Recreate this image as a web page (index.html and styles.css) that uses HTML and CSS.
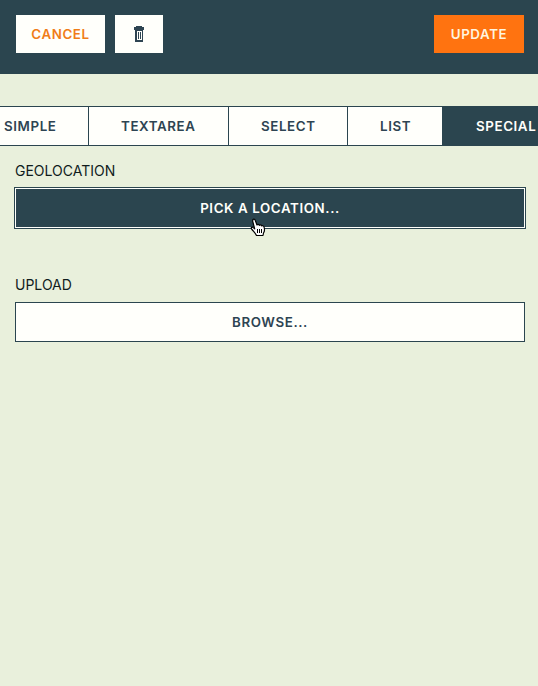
FILE: index.html
```html
<!DOCTYPE html>
<html lang="en">
<head>
<meta charset="utf-8">
<title>Edit item</title>
<link rel="stylesheet" href="styles.css">
</head>
<body>
<header class="toolbar">
  <button class="btn cancel">CANCEL</button>
  <button class="btn trash" aria-label="Delete">
    <svg width="12" height="16" viewBox="0 0 12 16" shape-rendering="crispEdges"><path fill="#2e4452" fill-rule="evenodd" d="M3 0h6v1h2v3h-1v12H2V4H1V1h2zM4 5v9h5V5z"/><path fill="#2e4452" d="M5 6h1v7H5zM7 6h1v7H7z"/></svg>
  </button>
  <button class="btn update">UPDATE</button>
</header>
<nav class="tabs">
  <a class="tab simple">SIMPLE</a>
  <a class="tab textarea">TEXTAREA</a>
  <a class="tab select">SELECT</a>
  <a class="tab list">LIST</a>
  <a class="tab special">SPECIAL</a>
</nav>
<main class="form">
  <section class="field">
    <label class="label">GEOLOCATION</label>
    <button class="wide active">PICK A LOCATION...</button>
  </section>
  <section class="field">
    <label class="label upload">UPLOAD</label>
    <button class="wide">BROWSE...</button>
  </section>
</main>
<svg class="cursor" width="17" height="19" viewBox="0 0 17 19"><path fill="#fff" stroke="#000" stroke-width="1.2" stroke-linejoin="round" d="M3 1.5c1-1 2 0 2.300 1L7 7c.5-1 2-.9 2.300.3.8-.9 2-.5 2.300.6 1-.7 2.200-.1 2.400 1 .8 2.400.7 4.400-.5 6.100L13 17.500H6.500C5.500 15 3.500 13.500 1.500 10.800c-.8-1.300.7-2.100 1.700-1.200l1.500 1.200L2.600 3z"/><path stroke="#000" d="M7.500 11v4M9.500 11v4M11.500 11v4"/></svg>
</body>
</html>
```
FILE: styles.css
```css
* { box-sizing: border-box; }
body {
  margin: 0;
  height: 686px;
  overflow: hidden;
  background: #e9f0dc;
  color: #101c1c;
  font-family: Inter, "Liberation Sans", sans-serif;
  font-size: 14px;
}
button {
  font: inherit;
  padding: 0;
  border: 0;
  border-radius: 0;
}
.toolbar {
  height: 74px;
  padding: 15px 14px 0 16px;
  display: flex;
  gap: 10px;
  background: #2b454f;
}
.btn, .tab, .wide {
  font-size: 13.333px;
  font-weight: 600;
  letter-spacing: .6px;
}
.btn {
  height: 38px;
  display: flex;
  align-items: center;
  justify-content: center;
  background: #fffffb;
}
.cancel { width: 89px; color: #f07d18; }
.trash { width: 48px; }
.update { width: 90px; margin-left: auto; background: #ff7310; color: #fff4df; }
.tabs {
  margin-top: 32px;
  height: 40px;
  display: flex;
  border-top: 1px solid #2b454f;
  border-bottom: 1px solid #2b454f;
  background: #fffffb;
}
.tab {
  flex: none;
  border-right: 1px solid #2b454f;
  padding-left: 32px;
  line-height: 39px;
  color: #2e4452;
  white-space: nowrap;
}
.simple { width: 89px; padding-left: 4px; }
.textarea { width: 140px; }
.select { width: 119px; }
.list { width: 95px; }
.special { width: 95px; padding-left: 33px; background: #2b454f; color: #fffffb; }
.form { padding: 15px 13px 0 14px; }
.field { height: 114px; }
.label {
  display: block;
  height: 26px;
  padding-left: 1px;
  line-height: 20px;
}
.upload { height: 27px; }
.wide {
  display: block;
  width: 510px;
  height: 40px;
  margin-left: 1px;
  border: 1px solid #2b454f;
  background: #fffffb;
  color: #2e4452;
}
.active {
  width: 512px;
  height: 42px;
  margin-left: 0;
  background: #2b454f;
  color: #fffffb;
  box-shadow: inset 0 0 0 1px #fffffb;
}
.cursor {
  position: absolute;
  left: 250px;
  top: 218px;
}
```
